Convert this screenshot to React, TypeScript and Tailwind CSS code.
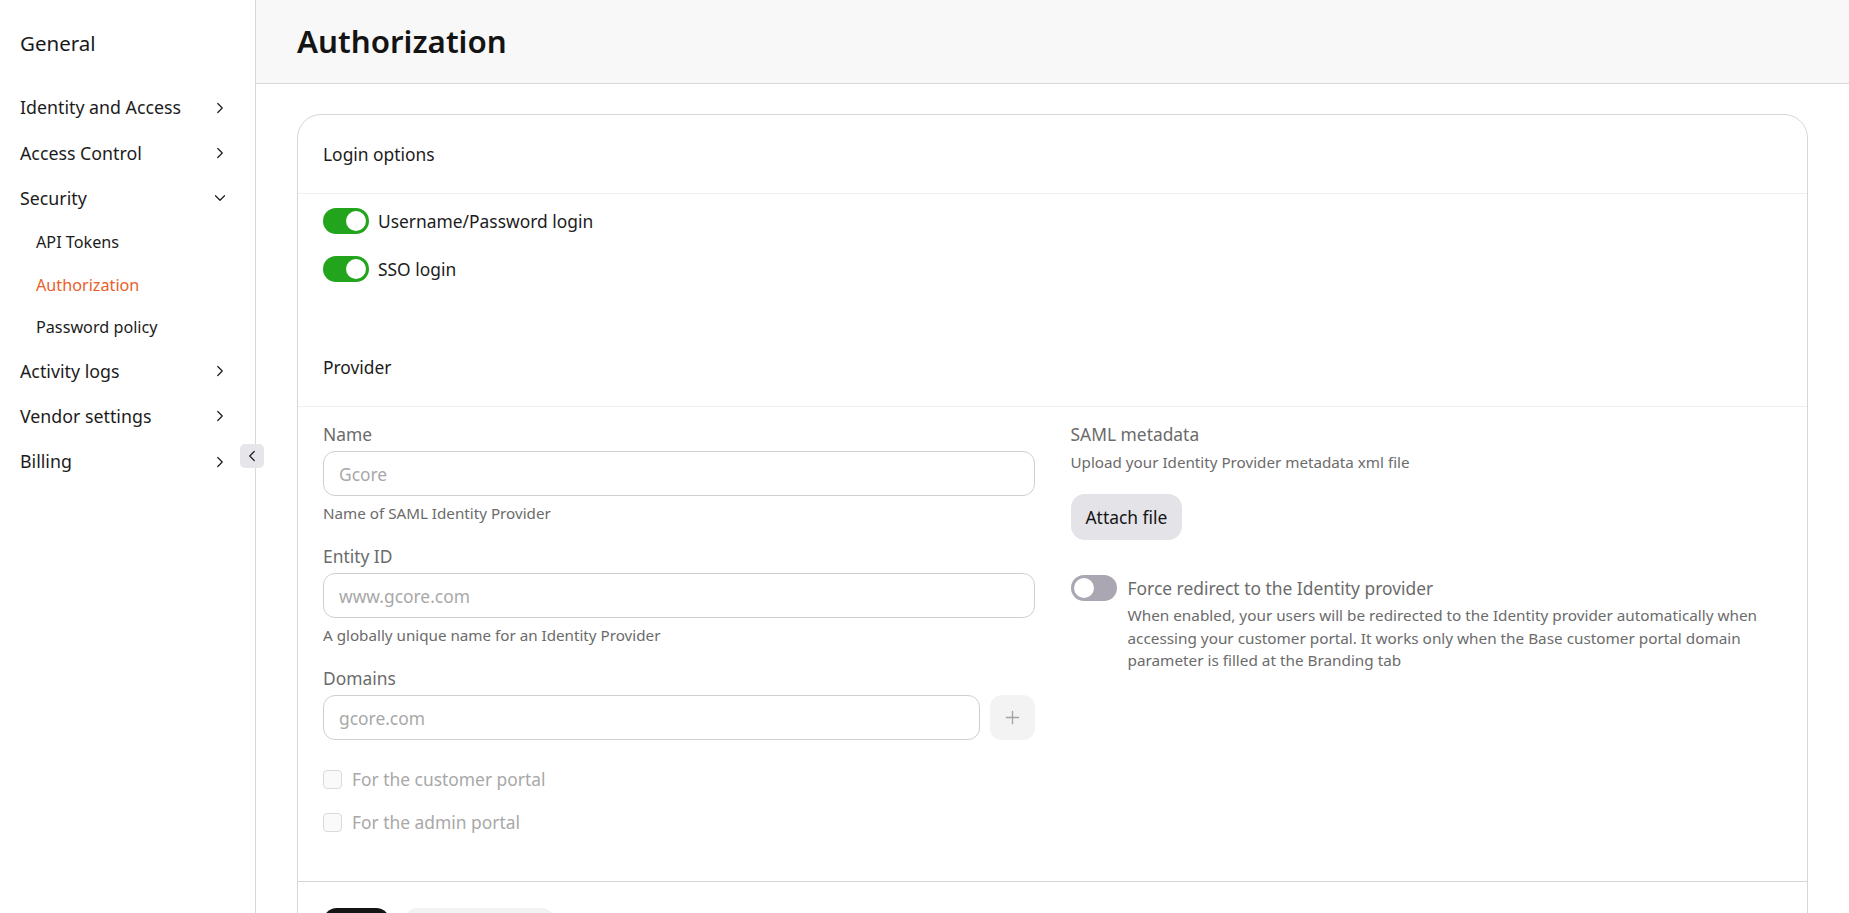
import React from 'react';
import { ChevronRight, ChevronDown, ChevronLeft, Plus } from 'lucide-react';

const font = { fontFamily: '"Noto Sans", "Open Sans", sans-serif' };

const NavItem: React.FC<{ label: string; open?: boolean }> = ({ label, open }) => (
  <div className="flex h-[45.4px] items-center justify-between text-[17.8px] text-[#1c1c1c]">
    <span>{label}</span>
    {open ? (
      <ChevronDown size={18} strokeWidth={1.6} />
    ) : (
      <ChevronRight size={18} strokeWidth={1.6} />
    )}
  </div>
);

const SubItem: React.FC<{ label: string; active?: boolean }> = ({ label, active }) => (
  <div
    className={`flex h-[42.4px] items-center pl-[16px] text-[16.2px] ${
      active ? 'text-[#e8602c]' : 'text-[#1c1c1c]'
    }`}
  >
    {label}
  </div>
);

const Toggle: React.FC<{ on?: boolean }> = ({ on }) => (
  <div
    className={`flex h-[26px] w-[46px] shrink-0 items-center rounded-full px-[3px] ${
      on ? 'justify-end bg-[#22a51c]' : 'justify-start bg-[#aaa6b2]'
    }`}
  >
    <div className="h-[20px] w-[20px] rounded-full bg-white" />
  </div>
);

const Field: React.FC<{ label: string; placeholder: string; help?: string }> = ({
  label,
  placeholder,
  help,
}) => (
  <div className="mb-[22px]">
    <div className="mb-[6px] text-[17.4px] leading-[22px] text-[#6b6b6b]">{label}</div>
    <input
      placeholder={placeholder}
      className="h-[45px] w-full rounded-[12px] border border-[#cfcfcf] px-[15px] text-[17.4px] text-[#1c1c1c] outline-none placeholder:text-[#a8a8a8]"
    />
    {help && <div className="mt-[7px] text-[15.2px] leading-[20px] text-[#6b6b6b]">{help}</div>}
  </div>
);

const Checkbox: React.FC<{ label: string }> = ({ label }) => (
  <label className="flex h-[22px] items-center gap-[10px] text-[17.4px] text-[#a8a8a8]">
    <span className="h-[19px] w-[19px] rounded-[4px] border border-[#dadada] bg-[#fafafa]" />
    {label}
  </label>
);

export default function App() {
  return (
    <div style={font} className="flex h-[913px] overflow-hidden bg-white">
      <aside className="relative w-[256px] shrink-0 border-r border-[#d9d9d9] pl-5 pr-[26px] pt-[29px]">
        <div className="mb-[28px] text-[20.5px] leading-[28px] text-[#1a1a1a]">General</div>
        <NavItem label="Identity and Access" />
        <NavItem label="Access Control" />
        <NavItem label="Security" open />
        <SubItem label="API Tokens" />
        <SubItem label="Authorization" active />
        <SubItem label="Password policy" />
        <NavItem label="Activity logs" />
        <NavItem label="Vendor settings" />
        <NavItem label="Billing" />
        <button className="absolute left-[240px] top-[444px] flex h-[24px] w-[24px] items-center justify-center rounded-[5px] bg-[#e6e5ea] text-[#1c1c1c]">
          <ChevronLeft size={18} strokeWidth={1.6} />
        </button>
      </aside>

      <main className="flex min-w-0 flex-1 flex-col">
        <header className="flex h-[84px] shrink-0 items-center border-b border-[#d9d9d9] bg-[#f8f8f8] pl-[41px]">
          <h1 className="text-[31.3px] font-semibold text-[#141414]">Authorization</h1>
        </header>

        <div className="px-[41px] pt-[30px]">
          <div className="rounded-[24px] border border-[#d6d6d6]">
            <div className="flex h-[79px] items-center border-b border-[#f0f0f0] px-[25px] text-[17.4px] text-[#1c1c1c]">
              Login options
            </div>
            <div className="flex flex-col gap-[22px] px-[25px] pb-[46px] pt-[14px]">
              <div className="flex items-center gap-[9px] text-[17.4px] leading-[26px] text-[#1c1c1c]">
                <Toggle on />
                Username/Password login
              </div>
              <div className="flex items-center gap-[9px] text-[17.4px] leading-[26px] text-[#1c1c1c]">
                <Toggle on />
                SSO login
              </div>
            </div>

            <div className="flex h-[79px] items-center border-b border-[#f0f0f0] px-[25px] text-[17.4px] text-[#1c1c1c]">
              Provider
            </div>
            <div className="grid grid-cols-2 gap-[36px] px-[25px] pt-[16px] pb-[48px]">
              <div>
                <Field label="Name" placeholder="Gcore" help="Name of SAML Identity Provider" />
                <Field
                  label="Entity ID"
                  placeholder="www.gcore.com"
                  help="A globally unique name for an Identity Provider"
                />
                <div>
                  <div className="mb-[6px] text-[17.4px] leading-[22px] text-[#6b6b6b]">Domains</div>
                  <div className="flex gap-[10px]">
                    <input
                      placeholder="gcore.com"
                      className="h-[45px] min-w-0 flex-1 rounded-[12px] border border-[#cfcfcf] px-[15px] text-[17.4px] outline-none placeholder:text-[#a8a8a8]"
                    />
                    <button className="flex h-[45px] w-[45px] items-center justify-center rounded-[12px] bg-[#f3f3f3] text-[#a3a3a3]">
                      <Plus size={21} strokeWidth={1.5} />
                    </button>
                  </div>
                </div>
                <div className="mt-[28px] flex flex-col gap-[21px]">
                  <Checkbox label="For the customer portal" />
                  <Checkbox label="For the admin portal" />
                </div>
              </div>

              <div>
                <div className="text-[17.4px] leading-[22px] text-[#6b6b6b]">SAML metadata</div>
                <div className="mt-[7px] text-[15.2px] leading-[20px] text-[#6b6b6b]">
                  Upload your Identity Provider metadata xml file
                </div>
                <button className="mt-[22px] h-[46px] rounded-[14px] bg-[#e4e3e8] px-[15px] text-[17.4px] text-[#141414]">
                  Attach file
                </button>
                <div className="mt-[32px] flex gap-[11px]">
                  <div className="pt-[3px]">
                    <Toggle />
                  </div>
                  <div>
                    <div className="text-[17.4px] leading-[32px] text-[#6b6b6b]">
                      Force redirect to the Identity provider
                    </div>
                    <p className="text-[15.3px] leading-[22.5px] text-[#6b6b6b]">
                      When enabled, your users will be redirected to the Identity provider automatically when
                      accessing your customer portal. It works only when the Base customer portal domain
                      parameter is filled at the Branding tab
                    </p>
                  </div>
                </div>
              </div>
            </div>

            <div className="flex gap-[14px] border-t border-[#d6d6d6] px-[25px] pt-[26px] pb-[26px]">
              <button aria-label="Save" className="h-[45px] w-[67px] rounded-[14px] bg-[#141414]" />
              <button aria-label="Cancel" className="h-[45px] w-[151px] rounded-[14px] bg-[#f2f2f2]" />
            </div>
          </div>
        </div>
      </main>
    </div>
  );
}
